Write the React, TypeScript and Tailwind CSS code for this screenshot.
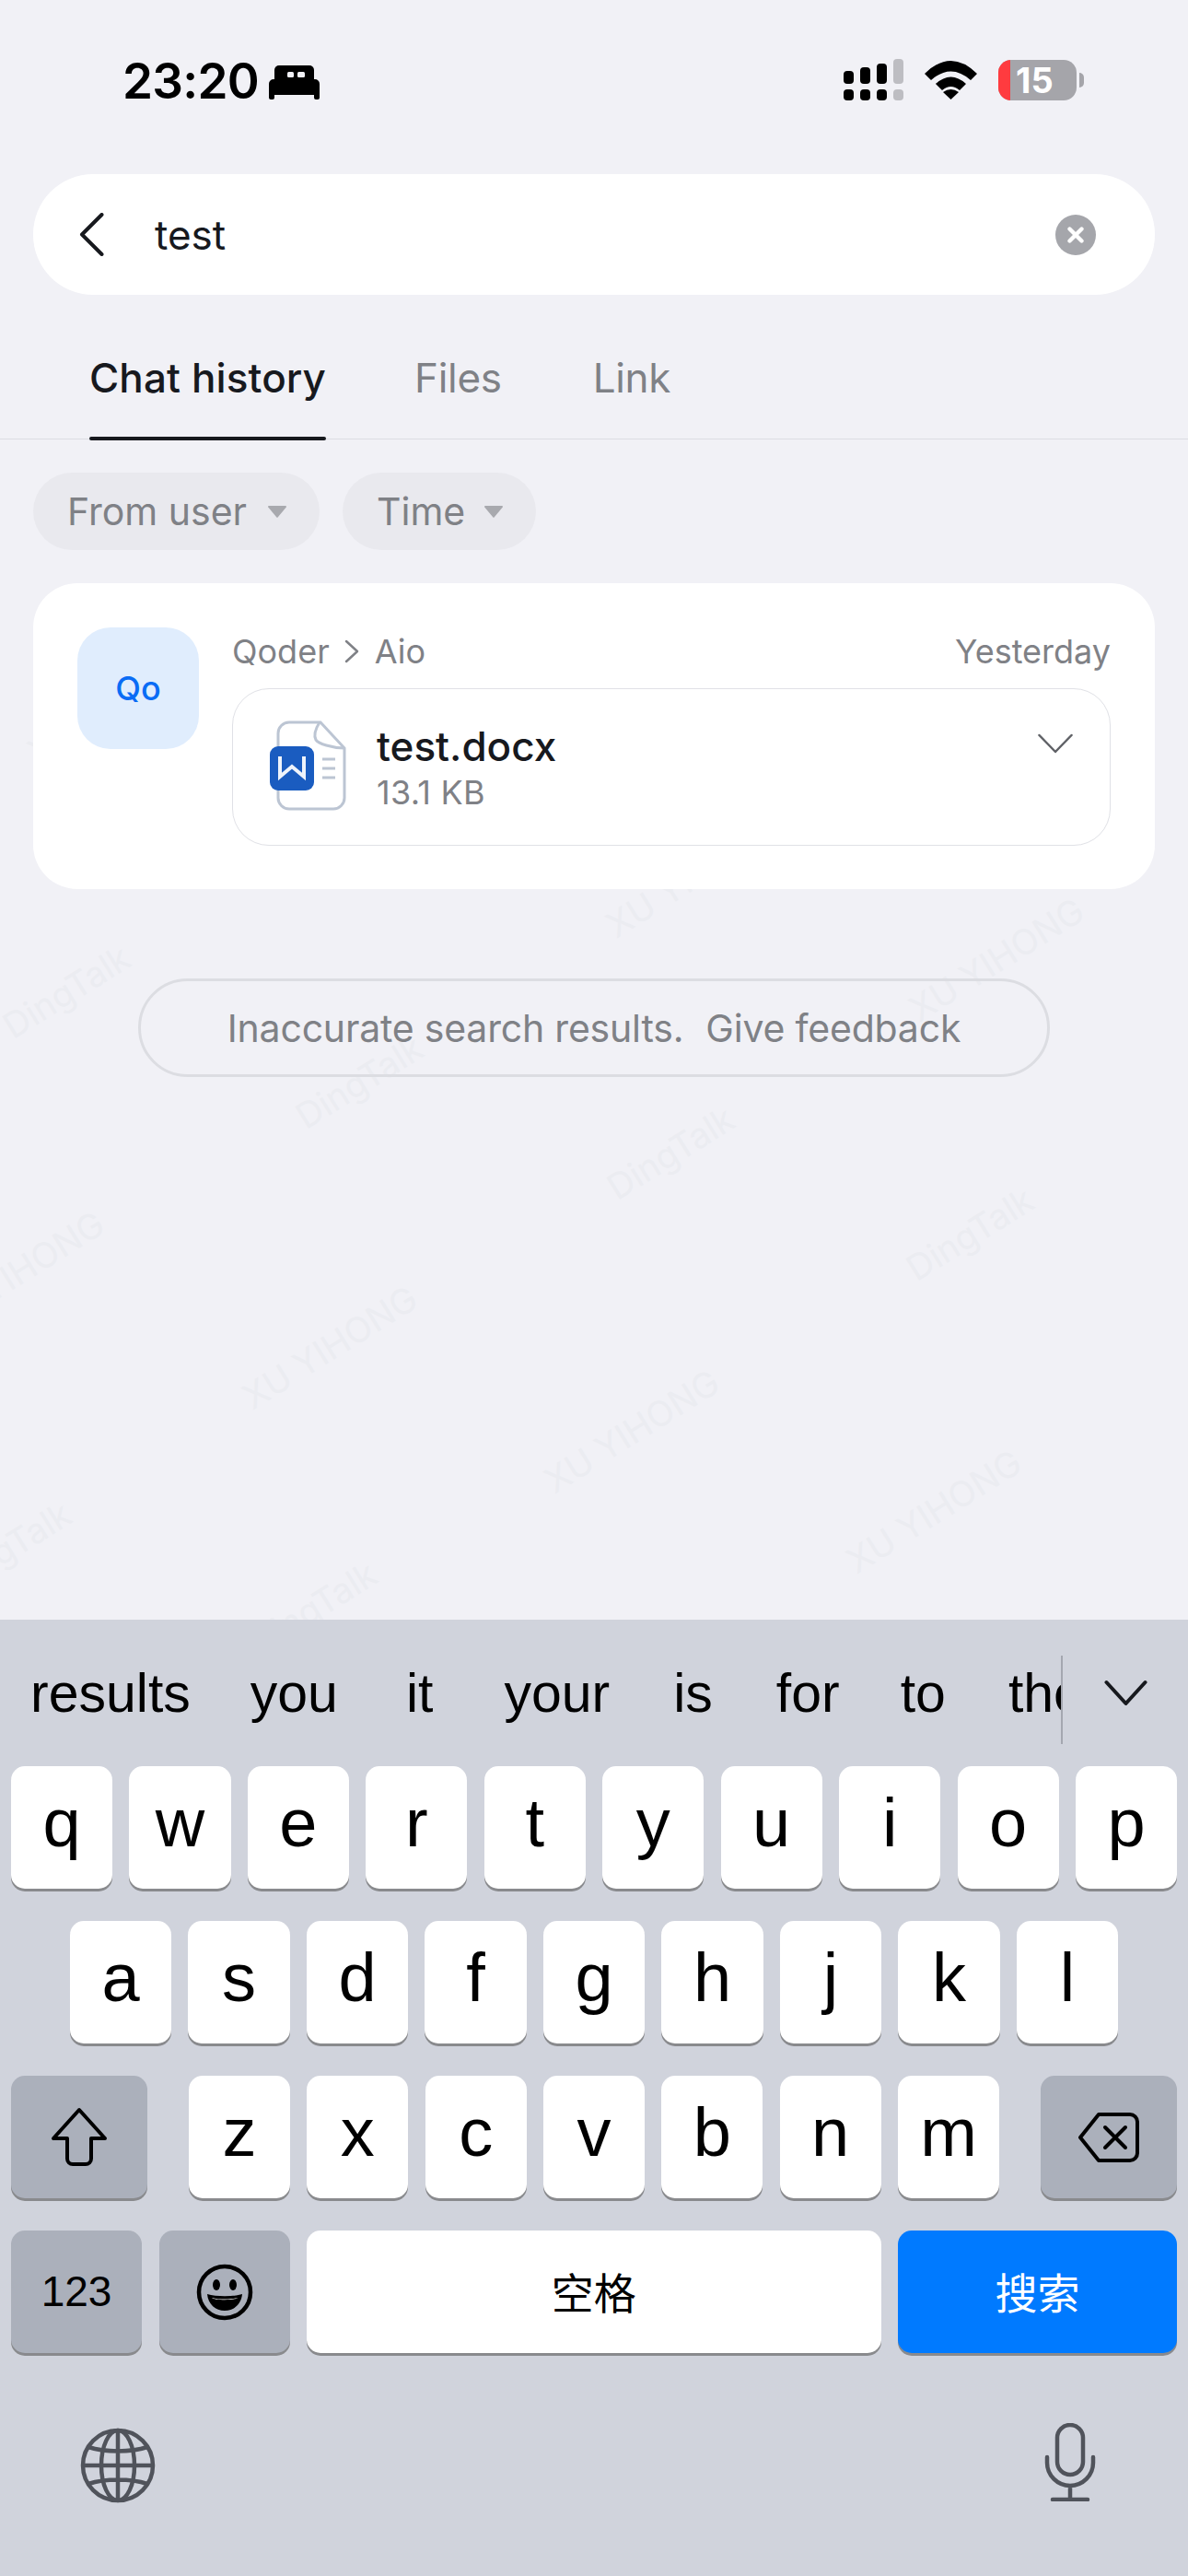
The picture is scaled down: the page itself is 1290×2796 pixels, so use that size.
import type { ReactNode } from "react";
import { X } from "lucide-react";

const SANS = "font-['Inter','Noto_Sans_CJK_SC',sans-serif]";
const KEY_FONT = "font-['Liberation_Sans','Noto_Sans_CJK_SC',sans-serif]";

const marks = [
  { text: "DingTalk", cls: "left-[72px] top-[1076px]" },
  { text: "DingTalk", cls: "left-[390px] top-[1174px]" },
  { text: "DingTalk", cls: "left-[728px] top-[1251px]" },
  { text: "DingTalk", cls: "left-[1053px] top-[1339px]" },
  { text: "DingTalk", cls: "left-[8px] top-[1680px]" },
  { text: "DingTalk", cls: "left-[340px] top-[1745px]" },
  { text: "XU YIHONG", cls: "left-[125px] top-[762px]" },
  { text: "XU YIHONG", cls: "left-[753px] top-[950px]" },
  { text: "XU YIHONG", cls: "left-[1082px] top-[1041px]" },
  { text: "XU YIHONG", cls: "left-[18px] top-[1381px]" },
  { text: "XU YIHONG", cls: "left-[358px] top-[1462px]" },
  { text: "XU YIHONG", cls: "left-[686px] top-[1553px]" },
  { text: "XU YIHONG", cls: "left-[1014px] top-[1640px]" },
];

const words = [
  { w: "results", cls: "" },
  { w: "you", cls: "ml-[65px]" },
  { w: "it", cls: "ml-[74px]" },
  { w: "your", cls: "ml-[77px]" },
  { w: "is", cls: "ml-[69px]" },
  { w: "for", cls: "ml-[69px]" },
  { w: "to", cls: "ml-[66px]" },
  { w: "the", cls: "ml-[68px]" },
];

function StatusBar() {
  return (
    <div className="flex h-[189px] items-start justify-between pl-[133px] pr-[113px] pt-[60px]">
      <div className="flex items-center gap-[11px]">
        <span className="text-[53px] font-semibold leading-[56px] tracking-[-0.7px] text-black">23:20</span>
        <svg width="55" height="37" viewBox="0 0 55 37" className="mt-[2px]">
          <path d="M11 0h33a5 5 0 0 1 5 5v10H6V5a5 5 0 0 1 5-5z" fill="#000" />
          <rect x="20" y="7" width="7" height="6" rx="1.500" fill="#f1f1f6" />
          <rect x="31" y="7" width="8" height="6" rx="1.500" fill="#f1f1f6" />
          <path d="M5 15h45a5 5 0 0 1 5 5v15a2 2 0 0 1-2 2h-2a2 2 0 0 1-2-2v-3H6v3a2 2 0 0 1-2 2H2a2 2 0 0 1-2-2V20a5 5 0 0 1 5-5z" fill="#000" />
        </svg>
      </div>
      <div className="flex items-center gap-[23px] pt-[4px]">
        <svg width="65" height="45" viewBox="0 0 65 45">
          <rect x="0" y="13" width="11" height="14" rx="4" fill="#000" />
          <rect x="18" y="9" width="11" height="18" rx="4" fill="#000" />
          <rect x="36" y="5" width="11" height="22" rx="4" fill="#000" />
          <rect x="54" y="0" width="11" height="27" rx="4" fill="#bdbdc2" />
          <rect x="0" y="33" width="11" height="12" rx="4" fill="#000" />
          <rect x="18" y="33" width="11" height="12" rx="4" fill="#000" />
          <rect x="36" y="33" width="11" height="12" rx="4" fill="#000" />
          <rect x="54" y="33" width="11" height="12" rx="4" fill="#bdbdc2" />
        </svg>
        <svg width="57" height="42" viewBox="0 0 57 42">
          <path d="M0 14 Q28.500 -14 57 14 L50 21 Q28.500 2 7 21 Z" fill="#000" />
          <path d="M12 25 Q28.500 10 45 25 L38 32 Q28.500 24 19 32 Z" fill="#000" />
          <path d="M20 34 Q28.500 28 37 34 L28.500 42 Z" fill="#000" />
        </svg>
        <div className="flex items-center">
          <div className="flex h-[44px] w-[85px] items-center overflow-hidden rounded-[14px] bg-[#a5a5aa]">
            <div className="h-full w-[13px] bg-[#ff3b3f]" />
            <span className="ml-[6px] text-[38px] font-bold leading-none text-white">15</span>
          </div>
          <div className="ml-[3px] h-[16px] w-[5px] rounded-r-full bg-[#a5a5aa]" />
        </div>
      </div>
    </div>
  );
}

function SearchBar() {
  return (
    <div className="mx-[36px] flex h-[131px] items-center rounded-[65px] bg-white pl-[50px] pr-[64px]">
      <svg width="27" height="47" viewBox="0 0 27 47" className="shrink-0">
        <path d="M24.500 2 3 23.500 24.500 45" fill="none" stroke="#17191e" strokeWidth="4" strokeLinecap="round" strokeLinejoin="round" />
      </svg>
      <span className="ml-[55px] flex-1 text-[44px] leading-none text-[#17191e]">test</span>
      <div className="flex h-[44px] w-[44px] items-center justify-center rounded-full bg-[#a5a6ab]">
        <X size={26} strokeWidth={4} className="text-white" />
      </div>
    </div>
  );
}

function Tabs() {
  return (
    <div className="mt-[59px] flex h-[98px] items-start gap-[96px] border-b border-[#dcdde3] pl-[97px] text-[44px] leading-[62px]">
      <div className="relative h-[98px] font-medium tracking-[0.1px] text-[#17191e]">
        Chat history
        <div className="absolute bottom-[-1px] left-0 h-[4px] w-full rounded-full bg-[#17191e]" />
      </div>
      <div className="tracking-[-0.3px] text-[#7f8186]">Files</div>
      <div className="ml-[3px] tracking-[-0.3px] text-[#7f8186]">Link</div>
    </div>
  );
}

function Chip({ label, cls }: { label: string; cls: string }) {
  return (
    <div className={`flex h-[84px] items-center justify-between rounded-[42px] bg-[#e9e9ee] pl-[37px] pr-[35px] ${cls}`}>
      <span className="text-[41px] leading-none text-[#7f8186]">{label}</span>
      <svg width="22" height="14" viewBox="0 0 22 14">
        <path d="M2 1h18a1 1 0 0 1 .8 1.600l-9 10.600a1 1 0 0 1-1.600 0L1.200 2.600A1 1 0 0 1 2 1z" fill="#a8a9ae" />
      </svg>
    </div>
  );
}

function WordIcon() {
  return (
    <svg width="83" height="98" viewBox="0 0 83 98" className="shrink-0">
      <path d="M21 2h34l26 28v54a12 12 0 0 1-12 12H21a12 12 0 0 1-12-12V14A12 12 0 0 1 21 2z" fill="#fff" stroke="#bcc5d3" strokeWidth="3" />
      <path d="M54 2c-5 8-6 15-4 19 2 4 18 9 31 9" fill="none" stroke="#bcc5d3" strokeWidth="3" />
      <rect x="0" y="28" width="48" height="48" rx="9" fill="#1a5cc0" />
      <path d="M11 39v22l13-11 13 11V39" fill="none" stroke="#eef3fb" strokeWidth="4" />
      <path d="M57 42h14M57 52h14M57 62h14" stroke="#bcc5d3" strokeWidth="3" />
    </svg>
  );
}

function ResultCard() {
  return (
    <div className="mx-[36px] mt-[36px] flex h-[332px] gap-[36px] rounded-[48px] bg-white pl-[48px] pr-[48px] pt-[48px]">
      <div className="flex h-[132px] w-[132px] shrink-0 items-center justify-center rounded-[36px] bg-[#e0edfd] text-[36px] font-medium text-[#0a6cf5]">
        Qo
      </div>
      <div className="min-w-0 flex-1">
        <div className="flex h-[66px] items-start justify-between pt-[1px] text-[36px] leading-[50px] text-[#7f8186]">
          <div className="flex items-center">
            Qoder
            <svg width="16" height="26" viewBox="0 0 16 26" className="ml-[16px] mr-[17px]">
              <path d="M2 2 14 13 2 24" fill="none" stroke="#7f8186" strokeWidth="2.500" strokeLinecap="round" strokeLinejoin="round" />
            </svg>
            Aio
          </div>
          <div>Yesterday</div>
        </div>
        <div className="flex h-[171px] items-start rounded-[40px] border border-[#e0e1e6] pl-[40px] pr-[40px] pt-[34px]">
          <WordIcon />
          <div className="ml-[33px] flex-1">
            <div className="text-[44px] font-medium leading-[56px] text-[#17191e]">test.docx</div>
            <div className="text-[36px] leading-[44px] tracking-[0.3px] text-[#7f8186]">13.1 KB</div>
          </div>
          <svg width="38" height="22" viewBox="0 0 38 22" className="mt-[14px]">
            <path d="M1.500 2 19 20 36.500 2" fill="none" stroke="#5f6166" strokeWidth="2.500" strokeLinecap="round" strokeLinejoin="round" />
          </svg>
        </div>
      </div>
    </div>
  );
}

function Key({ label, cls = "flex-1" }: { label: string; cls?: string }) {
  return (
    <div className={`flex items-center justify-center rounded-[15px] bg-white pb-[10px] text-[74px] leading-none text-black shadow-[0_3px_0_#898a8d] ${cls}`}>
      {label}
    </div>
  );
}

function GrayKey({ children, cls }: { children: ReactNode; cls: string }) {
  return (
    <div className={`flex items-center justify-center rounded-[15px] bg-[#abb0bb] shadow-[0_3px_0_#898a8d] ${cls}`}>
      {children}
    </div>
  );
}

function Keyboard() {
  return (
    <div className={`relative mt-auto h-[1038px] bg-[#d0d3dc] ${KEY_FONT}`}>
      <div className="flex h-[159px]">
        <div className="my-[39px] flex h-[96px] w-[1154px] items-center overflow-hidden border-r-2 border-[#a4a7b0] pb-[13px] pl-[33px] text-[59px] leading-none text-black">
          {words.map((s) => (
            <span key={s.w} className={`shrink-0 ${s.cls}`}>{s.w}</span>
          ))}
        </div>
        <svg width="47" height="29" viewBox="0 0 47 29" className="ml-[45px] mt-[65px]">
          <path d="M2.500 3 23.500 26 44.500 3" fill="none" stroke="#17191e" strokeWidth="4" strokeLinecap="round" strokeLinejoin="round" />
        </svg>
      </div>
      <div className="flex flex-col gap-[35px]">
        <div className="flex h-[133px] gap-[18.300px] px-[12px]">
          {"qwertyuiop".split("").map((k) => <Key key={k} label={k} />)}
        </div>
        <div className="flex h-[133px] gap-[18.300px] px-[76px]">
          {"asdfghjkl".split("").map((k) => <Key key={k} label={k} />)}
        </div>
        <div className="flex h-[133px] px-[12px]">
          <GrayKey cls="w-[148px]">
            <svg width="62" height="66" viewBox="0 0 62 66">
              <path d="M31 3 3 34h15v22a6 6 0 0 0 6 6h14a6 6 0 0 0 6-6V34h15z" fill="none" stroke="#000" strokeWidth="4" strokeLinejoin="round" />
            </svg>
          </GrayKey>
          <div className="mx-[45px] flex flex-1 gap-[18.300px]">
            {"zxcvbnm".split("").map((k) => <Key key={k} label={k} />)}
          </div>
          <GrayKey cls="w-[148px]">
            <svg width="66" height="54" viewBox="0 0 66 54">
              <path d="M22 2h34a8 8 0 0 1 8 8v34a8 8 0 0 1-8 8H22L2 27z" fill="none" stroke="#000" strokeWidth="4" strokeLinejoin="round" />
              <path d="M29 16l22 22M51 16 29 38" stroke="#000" strokeWidth="4" strokeLinecap="round" />
            </svg>
          </GrayKey>
        </div>
        <div className="flex h-[133px] gap-[18.500px] px-[12px]">
          <GrayKey cls="w-[142px] text-[46px] text-black">123</GrayKey>
          <GrayKey cls="w-[142px]">
            <svg width="62" height="62" viewBox="0 0 62 62">
              <circle cx="31" cy="31" r="28" fill="none" stroke="#000" strokeWidth="4.500" />
              <ellipse cx="22" cy="23" rx="4" ry="6" fill="#000" />
              <ellipse cx="40" cy="23" rx="4" ry="6" fill="#000" />
              <path d="M12 33c10 3 28 3 38 0-1 11-9 18-19 18s-18-7-19-18z" fill="#000" />
              <path d="M17 37c8 2 20 2 28 0-2 3-26 3-28 0z" fill="#fff" />
            </svg>
          </GrayKey>
          <div className="flex flex-1 items-center justify-center rounded-[15px] bg-white pt-[6px] text-[46px] text-black shadow-[0_3px_0_#898a8d]">
            空格
          </div>
          <div className="flex w-[303px] items-center justify-center rounded-[15px] bg-[#007aff] pt-[6px] text-[46px] text-white shadow-[0_3px_0_#898a8d]">
            搜索
          </div>
        </div>
      </div>
      <div className="mt-[76px] flex h-[85px] items-center justify-between pl-[87px] pr-[100px]">
        <svg width="82" height="82" viewBox="0 0 82 82" className="mt-[6px]">
          <g fill="none" stroke="#50535b" strokeWidth="4.500">
            <circle cx="41" cy="41" r="38" />
            <ellipse cx="41" cy="41" rx="18" ry="38" />
            <path d="M41 3v76M3 41h76M9 21c18 6 46 6 64 0M9 61c18-6 46-6 64 0" />
          </g>
        </svg>
        <svg width="56" height="85" viewBox="0 0 56 85">
          <g fill="none" stroke="#50535b" strokeWidth="4.500" strokeLinecap="round">
            <rect x="14" y="2" width="28" height="54" rx="14" />
            <path d="M3 37v6a25 25 0 0 0 50 0v-6M28 68v15M9 83h38" />
          </g>
        </svg>
      </div>
    </div>
  );
}

export default function App() {
  return (
    <div className={`relative flex h-[2796px] w-[1290px] flex-col overflow-hidden bg-[#f1f1f6] ${SANS}`}>
      {marks.map((m, i) => (
        <div
          key={i}
          className={`absolute -translate-x-1/2 -translate-y-1/2 -rotate-[32deg] whitespace-nowrap text-[38px] leading-none text-[#ebecf1] ${m.cls}`}
        >
          {m.text}
        </div>
      ))}
      <div className="relative flex flex-1 flex-col">
        <StatusBar />
        <SearchBar />
        <Tabs />
        <div className="mt-[36px] flex gap-[25px] px-[36px]">
          <Chip label="From user" cls="w-[311px]" />
          <Chip label="Time" cls="w-[210px]" />
        </div>
        <ResultCard />
        <div className="mx-[150px] mt-[97px] flex h-[107px] items-center justify-center gap-[24px] rounded-[54px] border-[3px] border-[#dcdde2] pt-[2px] text-[41px] leading-none tracking-[-0.2px] text-[#7f8186]">
          <span>Inaccurate search results.</span>
          <span>Give feedback</span>
        </div>
        <Keyboard />
      </div>
    </div>
  );
}
